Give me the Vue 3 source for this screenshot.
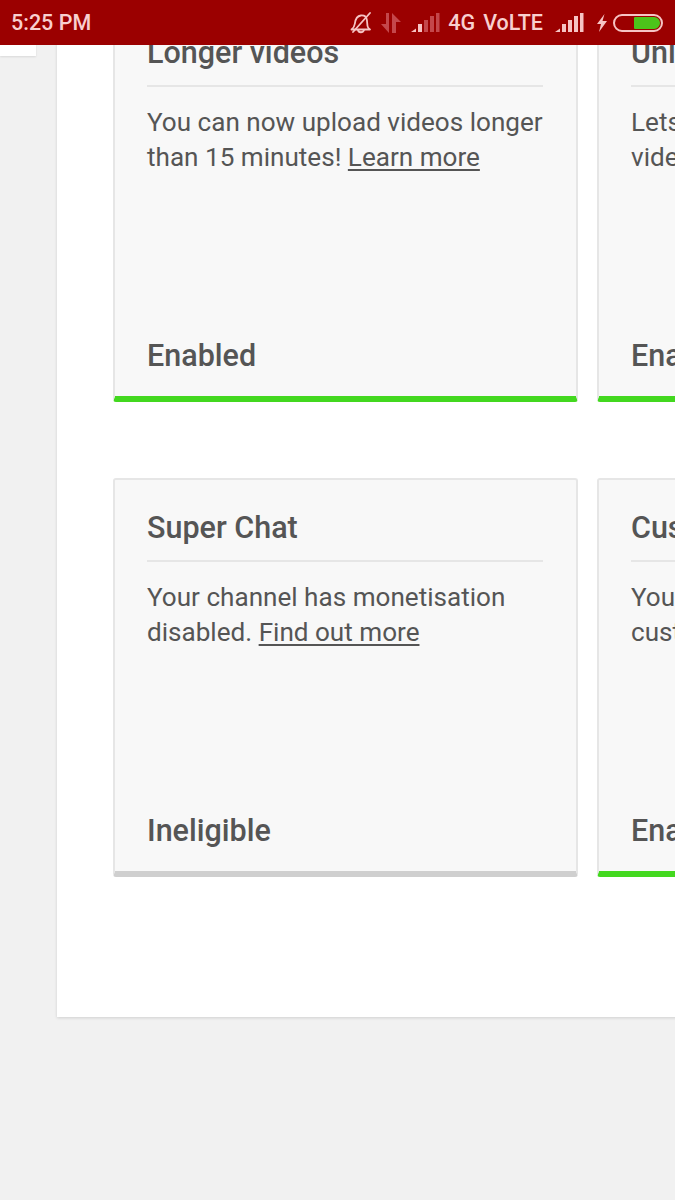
<script setup>
const rows = [
  [
    { title: 'Longer videos', text: 'You can now upload videos longer than 15 minutes!', link: 'Learn more', status: 'Enabled', on: true },
    { title: 'Unlisted videos', text: 'Lets you upload and share private videos', link: '', status: 'Enabled', on: true }
  ],
  [
    { title: 'Super Chat', text: 'Your channel has monetisation disabled.', link: 'Find out more', status: 'Ineligible', on: false },
    { title: 'Custom thumbnails', text: 'You can now upload and use custom thumbnails', link: '', status: 'Enabled', on: true }
  ]
]
</script>

<template>
  <div class="screen">
    <header class="statusbar">
      <span class="time">5:25 PM</span>
      <div class="indicators">
        <svg class="bell" width="22" height="22" viewBox="0 0 22 22" fill="none" stroke="#f6c4c4" stroke-width="1.8" stroke-linejoin="round" stroke-linecap="round">
          <path d="M1.500 17.500c2-1.500 3-3 3.400-6 .4-3.400 2-7.500 6-8 3.500-.3 5.600 1.500 6 4.500l.6 6c.2 1.500 1 2.500 2.500 3.500z" />
          <path d="M8 18c.5 3 5 3 6 0" />
          <path d="M3 20 20 1" />
        </svg>
        <svg class="arrows" width="20" height="20" viewBox="0 0 20 20" fill="#c4474b">
          <path d="M5 0h3v20L0 11h5z" />
          <path d="M11 20V0l9 9h-5v11z" />
        </svg>
        <svg class="signal dim" width="29" height="20" viewBox="0 0 29 20">
          <path d="M0 19l5-3.500V19z" fill="#f6c4c4" />
          <rect x="7" y="11" width="4" height="8" fill="#f6c4c4" />
          <rect x="13" y="7" width="4" height="12" fill="#c4474b" />
          <rect x="19" y="3" width="4" height="16" fill="#c4474b" />
          <rect x="25" y="0" width="3.500" height="19" fill="#c4474b" />
        </svg>
        <span class="net">4G</span>
        <span class="net volte">VoLTE</span>
        <svg class="signal full" width="29" height="20" viewBox="0 0 29 20" fill="#f6c4c4">
          <path d="M0 19l5-3.500V19z" />
          <rect x="7" y="11" width="4" height="8" />
          <rect x="13" y="7" width="4" height="12" />
          <rect x="19" y="3" width="4" height="16" />
          <rect x="25" y="0" width="3.500" height="19" />
        </svg>
        <svg class="bolt" width="12" height="18" viewBox="0 0 12 18" fill="#f6c4c4">
          <path d="M8.500 0 1 10h4l-2 8 8-11H6.500z" />
        </svg>
        <div class="battery"><div class="level"></div></div>
      </div>
    </header>

    <div class="menu-stub"></div>

    <main class="panel">
      <section v-for="(row, i) in rows" :key="i" class="row">
        <article v-for="card in row" :key="card.title" class="card" :class="{ on: card.on }">
          <h3 class="title">{{ card.title }}</h3>
          <p class="text">{{ card.text }} <a v-if="card.link" class="link">{{ card.link }}</a></p>
          <div class="status">{{ card.status }}</div>
        </article>
      </section>
    </main>
  </div>
</template>

<style>
html, body {
  margin: 0;
  background: #f1f1f1;
  overflow: hidden;
}
</style>

<style scoped>
.screen {
  position: relative;
  width: 675px;
  height: 1200px;
  overflow: hidden;
  background: #f1f1f1;
  font-family: Roboto, "Liberation Sans", sans-serif;
  color: #555;
}

.statusbar {
  position: absolute;
  top: 0;
  left: 0;
  right: 0;
  z-index: 2;
  height: 45px;
  background: #9b0000;
  display: flex;
  align-items: center;
  justify-content: space-between;
  padding: 0 12px 0 11px;
  box-sizing: border-box;
  color: #f8cfcf;
}

.time {
  font-size: 21.500px;
  font-weight: 500;
}

.indicators {
  display: flex;
  align-items: center;
}

.bell { margin-right: 9px; }
.arrows { margin-right: 10px; }
.net {
  font-size: 21.500px;
  font-weight: 500;
  margin-left: 8px;
}
.volte { margin-left: 8px; }
.full { margin-left: 12px; }
.bolt { margin-left: 12px; }

.battery {
  width: 50px;
  height: 18px;
  margin-left: 5px;
  box-sizing: border-box;
  border: 2px solid #f6c4c4;
  border-radius: 9px;
  padding: 1px;
  display: flex;
  justify-content: flex-end;
}

.level {
  width: 26px;
  background: #4cc41a;
  border-radius: 1px 6px 6px 1px;
}

.menu-stub {
  position: absolute;
  top: 0;
  left: 0;
  width: 36px;
  height: 56px;
  background: #fff;
  box-shadow: 0 1px 2px rgba(0, 0, 0, .1);
}

.panel {
  margin-left: 57px;
  width: 700px;
  height: 1017px;
  box-sizing: border-box;
  padding: 3px 0 0 56px;
  background: #fff;
  box-shadow: 0 1px 3px rgba(0, 0, 0, .14);
}

.row {
  display: flex;
  gap: 19px;
  margin-bottom: 76px;
}

.card {
  flex: none;
  width: 465px;
  height: 399px;
  box-sizing: border-box;
  padding: 30px 33px 0 32px;
  display: flex;
  flex-direction: column;
  background: #f8f8f8;
  border: 2px solid #e6e6e6;
  border-bottom: 6px solid #cfcfcf;
  border-radius: 3px;
}

.card.on {
  border-bottom-color: #43d81f;
}

.title {
  margin: 0;
  padding-bottom: 14px;
  font-size: 30.500px;
  line-height: 36px;
  font-weight: 500;
  border-bottom: 2px solid #e6e6e6;
}

.text {
  margin: 18px 0 0;
  font-size: 26.100px;
  line-height: 35px;
  font-weight: 400;
}

.link {
  text-decoration: underline;
  text-underline-offset: 3px;
}

.status {
  margin-top: auto;
  margin-bottom: 22px;
  font-size: 30.500px;
  line-height: 36px;
  font-weight: 500;
}
</style>
